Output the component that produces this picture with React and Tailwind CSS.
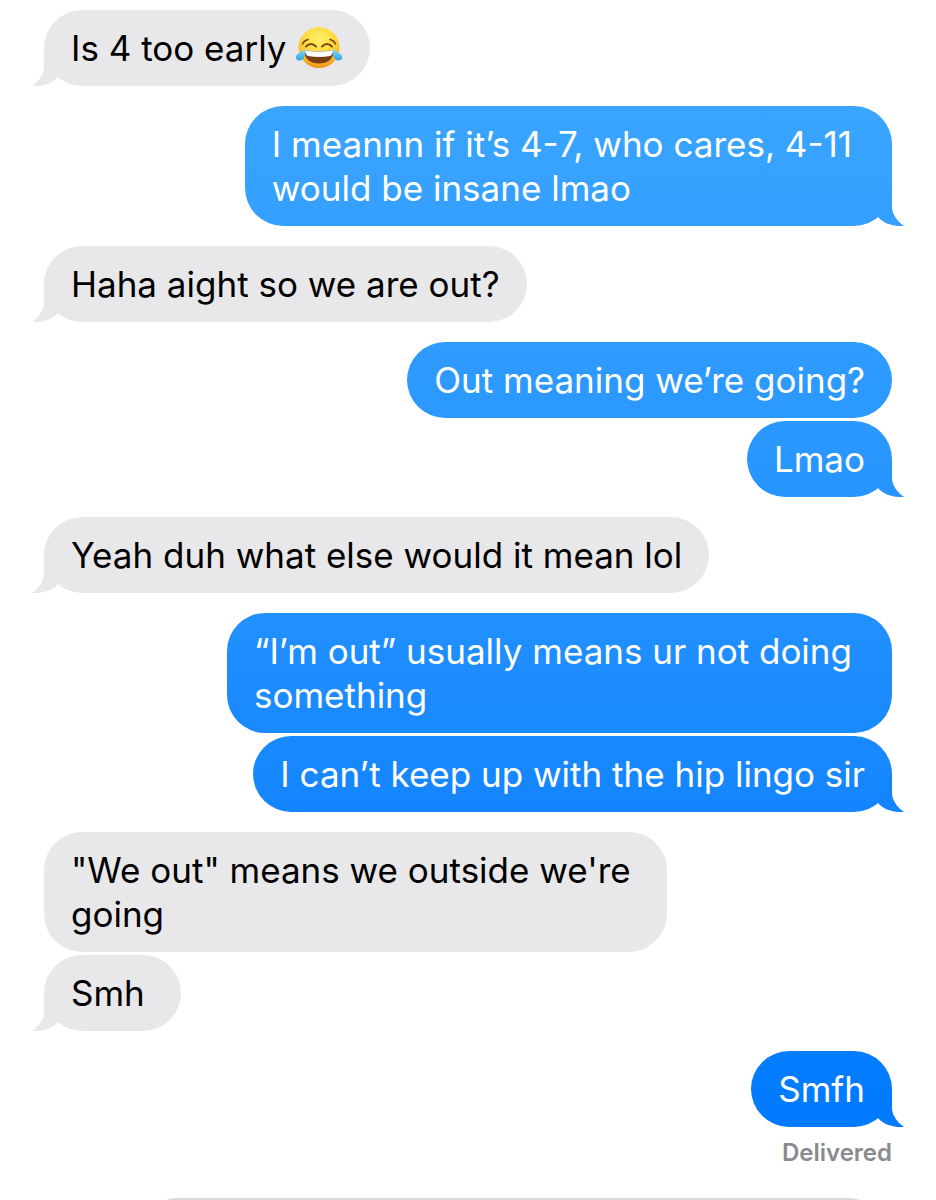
const messages = [
  { from: "them", lines: ["Is 4 too early"], emoji: true, tail: true },
  {
    from: "me",
    lines: ["I meannn if it’s 4-7, who cares, 4-11", "would be insane lmao"],
    color: "from-[#3aa5ff] to-[#349fff] text-[#349fff]",
    pad: "pr-10",
    tail: true,
  },
  { from: "them", lines: ["Haha aight so we are out?"], tail: true },
  {
    from: "me",
    lines: ["Out meaning we’re going?"],
    color: "from-[#2f9bff] to-[#2b98ff] text-[#2b98ff]",
  },
  {
    from: "me",
    lines: ["Lmao"],
    color: "from-[#2b98ff] to-[#2795ff] text-[#2795ff]",
    tail: true,
  },
  { from: "them", lines: ["Yeah duh what else would it mean lol"], tail: true },
  {
    from: "me",
    lines: ["“I’m out” usually means ur not doing", "something"],
    color: "from-[#2190ff] to-[#1989ff] text-[#1989ff]",
    pad: "pr-10",
  },
  {
    from: "me",
    lines: ["I can’t keep up with the hip lingo sir"],
    color: "from-[#1989ff] to-[#1585ff] text-[#1585ff]",
    tail: true,
  },
  {
    from: "them",
    lines: ['"We out" means we outside we\'re', "going"],
    pad: "pr-9",
  },
  { from: "them", lines: ["Smh"], pad: "pr-9", tail: true },
  {
    from: "me",
    lines: ["Smfh"],
    color: "from-[#057dff] to-[#007aff] text-[#007aff]",
    tail: true,
  },
];

const Tail = ({ left }) => (
  <svg
    className={
      left
        ? "absolute bottom-0 -left-3 -scale-x-100"
        : "absolute bottom-0 -right-3"
    }
    width="28"
    height="38"
    viewBox="0 0 28 38"
    fill="currentColor"
    aria-hidden="true"
  >
    <path d="M16 0V19C16 26 21 33 28 38C20 38.500 9 37 2 29Z" />
  </svg>
);

const JoyEmoji = () => (
  <svg
    className="ml-2 inline-block align-top"
    width="48"
    height="44"
    viewBox="0 0 48 44"
    role="img"
    aria-label="face with tears of joy"
  >
    <defs>
      <radialGradient id="joyFace" cx="50%" cy="30%" r="70%">
        <stop offset="0" stopColor="#fff06a" />
        <stop offset="0.55" stopColor="#ffd83c" />
        <stop offset="0.85" stopColor="#fbb224" />
        <stop offset="1" stopColor="#ef8f14" />
      </radialGradient>
      <linearGradient id="joyTear" x1="0" y1="0" x2="0" y2="1">
        <stop offset="0" stopColor="#8fdcf8" />
        <stop offset="1" stopColor="#2aa4e6" />
      </linearGradient>
    </defs>
    <circle cx="24" cy="21.500" r="20.500" fill="url(#joyFace)" />
    <g fill="none" stroke="#7a4510" strokeLinecap="round">
      <path d="M7.500 18Q9 14.500 13 13.500" strokeWidth="1.600" />
      <path d="M35 13.500Q39 14.500 40.500 18" strokeWidth="1.600" />
      <path d="M11 20.500Q16 15.500 21 20.500" strokeWidth="2" />
      <path d="M27 20.500Q32 15.500 37 20.500" strokeWidth="2" />
    </g>
    <path d="M9 24Q24 26.500 39 24Q38 37.500 24 37.500Q10 37.500 9 24Z" fill="#7b3f12" />
    <path d="M10 24.200Q24 26.600 38 24.200Q38 28.500 35 30Q24 32 13 30Q10 28.500 10 24.200Z" fill="#fff" />
    <path d="M10 22.500C11 27 10 33.500 5.500 34.500C1 35 -0.500 31 2 28.500C4 26.500 7.500 25.500 10 22.500Z" fill="url(#joyTear)" />
    <path d="M38 22.500C37 27 38 33.500 42.500 34.500C47 35 48.500 31 46 28.500C44 26.500 40.500 25.500 38 22.500Z" fill="url(#joyTear)" />
  </svg>
);

const Bubble = ({ message, grouped }) => {
  const mine = message.from === "me";
  return (
    <li
      className={`flex ${mine ? "justify-end" : "justify-start"} ${
        grouped ? "mt-[3px]" : "mt-5 first:mt-0"
      }`}
    >
      <div
        className={`relative rounded-[38px] py-4 pl-[27px] ${
          message.pad || "pr-[27px]"
        } ${
          mine ? `bg-linear-to-b ${message.color}` : "bg-[#e8e8ea] text-[#e8e8ea]"
        }`}
      >
        {message.tail && <Tail left={!mine} />}
        <p
          className={`relative text-[35px] leading-[44px] ${
            mine ? "text-white" : "text-black"
          }`}
        >
          {message.lines.map((line) => (
            <span key={line} className="block">
              {line}
              {message.emoji && <JoyEmoji />}
            </span>
          ))}
        </p>
      </div>
    </li>
  );
};

const App = () => {
  return (
    <div className="bg-white font-['Inter','Liberation_Sans',sans-serif]">
      <main className="px-11 pt-[10px]">
        <ol>
          {messages.map((message, i) => (
            <Bubble
              key={i}
              message={message}
              grouped={i > 0 && messages[i - 1].from === message.from}
            />
          ))}
        </ol>
        <p className="mt-3 text-right text-[24px] leading-7 font-semibold text-[#8a8a8e]">
          Delivered
        </p>
      </main>
      {/* only the top edge of the compose box shows below the thread */}
      <footer className="mt-[31px] h-[2px] overflow-hidden pr-[50px] pl-[140px]">
        <input
          type="text"
          aria-label="Message"
          className="block h-[76px] w-full rounded-[38px] border-2 border-[#d9d9dc] px-6 outline-none"
        />
      </footer>
    </div>
  );
};

export default App;
